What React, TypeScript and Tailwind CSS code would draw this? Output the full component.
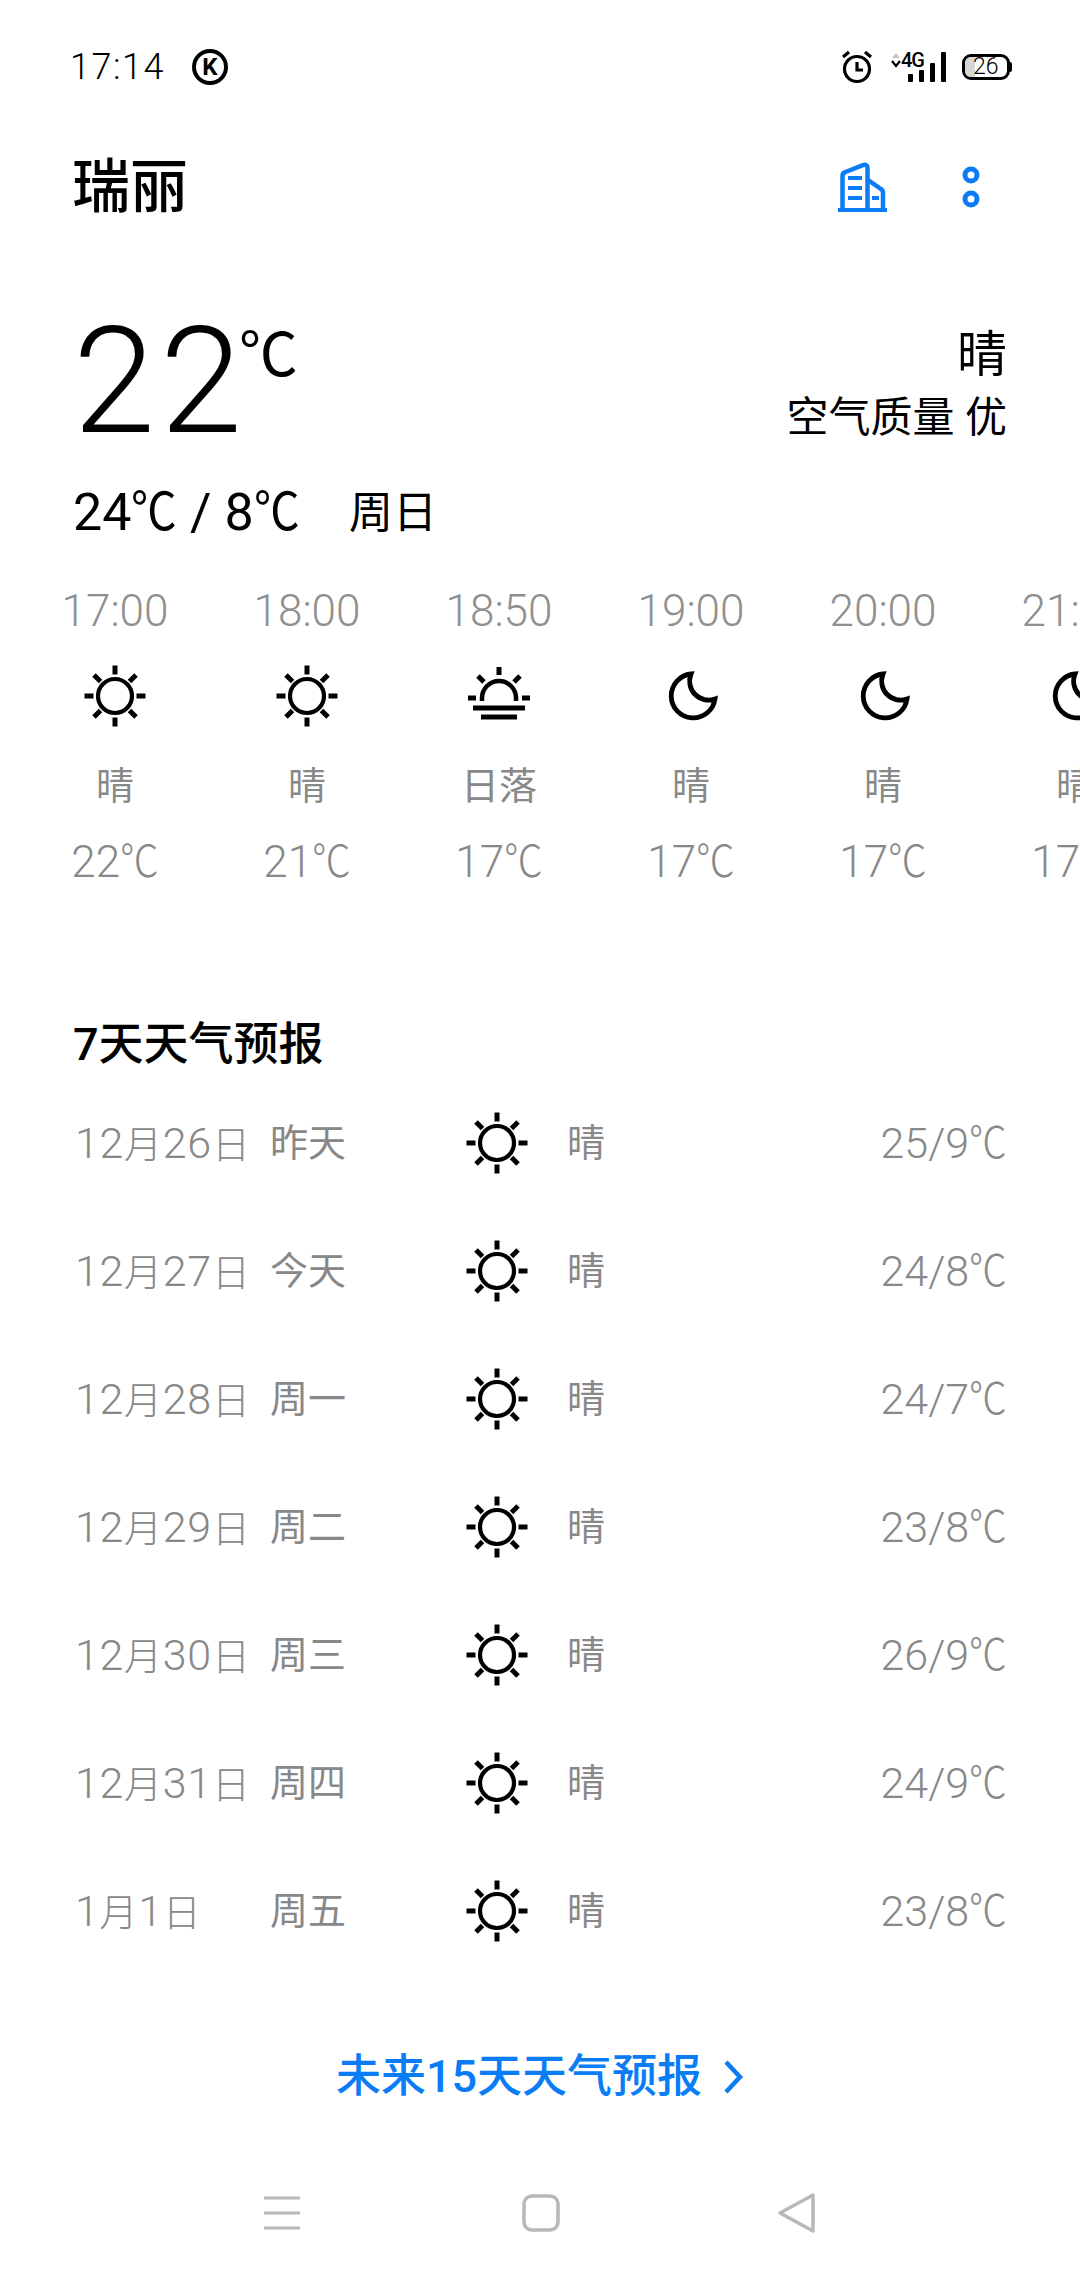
import React from 'react';

const base = { fontFamily: 'Roboto, "Noto Sans CJK SC", sans-serif' };
const cjkOnly = { fontFamily: '"Noto Sans CJK SC", sans-serif' };

const hours = [
  { time: '17:00', icon: 'sun', label: '晴', temp: '22' },
  { time: '18:00', icon: 'sun', label: '晴', temp: '21' },
  { time: '18:50', icon: 'sunset', label: '日落', temp: '17' },
  { time: '19:00', icon: 'moon', label: '晴', temp: '17' },
  { time: '20:00', icon: 'moon', label: '晴', temp: '17' },
  { time: '21:00', icon: 'moon', label: '晴', temp: '17' },
];

const days = [
  { date: '12月26日', day: '昨天', temp: '25/9' },
  { date: '12月27日', day: '今天', temp: '24/8' },
  { date: '12月28日', day: '周一', temp: '24/7' },
  { date: '12月29日', day: '周二', temp: '23/8' },
  { date: '12月30日', day: '周三', temp: '26/9' },
  { date: '12月31日', day: '周四', temp: '24/9' },
  { date: '1月1日', day: '周五', temp: '23/8' },
];

const rays = [
  'M32 1.500v9', 'M32 53.500v9', 'M1.500 32h9', 'M53.500 32h9',
  'M11 11l6.500 6.500', 'M53 11l-6.500 6.500', 'M11 53l6.500-6.500', 'M53 53l-6.500-6.500',
];

// the phone's ℃ is narrower than the Noto glyph
const Deg = () => (
  <span className="inline-block w-[0.88em] origin-left scale-x-[0.88] whitespace-nowrap leading-none" style={cjkOnly}>℃</span>
);

// digits are drawn larger than the hanzi in the date column
const DateText = ({ value }: { value: string }) => (
  <>
    {value.split(/(月|日)/).map((part, i) =>
      part === '月' || part === '日'
        ? <span key={i} className="text-[38px]">{part}</span>
        : <span key={i}>{part}</span>
    )}
  </>
);

const SunIcon = () => (
  <svg width="64" height="64" viewBox="0 0 64 64" fill="none" stroke="#000" strokeWidth="5">
    <circle cx="32" cy="32" r="17" strokeWidth="4.200" />
    {rays.map(d => <path key={d} d={d} />)}
  </svg>
);

const SunsetIcon = () => (
  <svg width="64" height="64" viewBox="0 0 64 64" fill="none" stroke="#000" strokeWidth="5">
    <path d="M15 37v-3a17 17 0 0 1 34 0v3" strokeWidth="4.500" />
    <path d="M32 3v8M11 12l6 6M53 12l-6 6M1 34h8M55 34h8M6 44h52M14 53h36" />
  </svg>
);

const MoonIcon = () => (
  <svg width="64" height="64" viewBox="0 0 64 64" fill="none" stroke="#000" strokeWidth="4.800" strokeLinejoin="miter">
    <path d="M32 10A22 22 0 1 0 56 35A19 19 0 0 1 32 10Z" />
  </svg>
);

const WeatherIcon = ({ name }: { name: string }) => {
  if (name === 'sunset') return <SunsetIcon />;
  if (name === 'moon') return <MoonIcon />;
  return <SunIcon />;
};

const StatusBar = () => (
  <div className="flex h-[134px] items-center justify-between pl-[70px] pr-[68px]">
    <div className="flex items-center">
      <span className="text-[36px] font-light tracking-[1.500px] text-black">17:14</span>
      <span className="ml-[27px] flex h-[36px] w-[36px] items-center justify-center rounded-full border-[4px] border-black text-[24px] font-bold leading-none text-black">
        K
      </span>
    </div>
    <div className="flex items-center">
      <svg width="32" height="34" viewBox="0 0 32 34" fill="none" stroke="#000" strokeWidth="3.200">
        <circle cx="16" cy="19" r="12.500" />
        <path d="M16 12v8h6" />
        <path d="M2 7l6-5M30 7l-6-5" />
      </svg>
      <div className="relative ml-[18px] h-[32px] w-[56px]">
        <svg className="absolute left-0 top-0" width="56" height="32" viewBox="0 0 56 32">
          <path d="M1 7l4-5 4 5z" fill="#c4c4c4" />
          <path d="M1 10l4 5 4-5" fill="none" stroke="#000" strokeWidth="2.200" />
          <rect x="17" y="23" width="5" height="8" rx="1" fill="#000" />
          <rect x="28" y="19" width="5" height="12" rx="1" fill="#000" />
          <rect x="39" y="12" width="5" height="19" rx="1" fill="#000" />
          <rect x="50" y="1" width="5" height="30" rx="1" fill="#000" />
        </svg>
        <span className="absolute left-[10px] top-[-3px] text-[20px] font-medium leading-[24px] tracking-[-1px] text-black">4G</span>
      </div>
      <div className="relative ml-[15px] h-[26px] w-[48px] rounded-[9px] border-[3px] border-black">
        <div className="h-full w-[10px] rounded-l-[6px] bg-[#d6d6d6]" />
        <span className="absolute left-[8px] top-[-3px] text-[23px] font-light leading-[26px] text-black">26</span>
      </div>
      <div className="h-[10px] w-[2px] rounded-r-sm bg-black" />
    </div>
  </div>
);

const TitleBar = () => (
  <div className="flex h-[106px] items-center justify-between pl-[72px] pr-[100px]">
    <h1 className="text-[58px] font-medium leading-none text-black">瑞丽</h1>
    <div className="flex items-center gap-[75px]">
      <svg width="49" height="50" viewBox="0 0 49 50" fill="none" stroke="#0a7cf5" strokeWidth="4.500">
        <path d="M4.500 47V14q0-3 3-4l18-7q4-1 4 3v41" />
        <path d="M30 18l13 9q2 1 2 4v16" />
        <path d="M0 48h49" strokeWidth="4" />
        <path d="M10 16h14M10 26h14M10 36h14M34 36h7" strokeWidth="4" />
      </svg>
      <svg width="18" height="42" viewBox="0 0 18 42" fill="none" stroke="#0a7cf5" strokeWidth="5">
        <circle cx="9" cy="9" r="6" />
        <circle cx="9" cy="33" r="6" />
      </svg>
    </div>
  </div>
);

const Hero = () => (
  <div className="flex items-start justify-between px-[73px] pt-[68px]">
    <div className="flex items-start">
      <span className="text-[148px] font-light leading-[148px] tracking-[5px] text-black">22</span>
      <span className="ml-[-8px] mt-[2px] text-[60px] leading-[80px] text-black" style={cjkOnly}>
        <span className="inline-block origin-left scale-x-[0.98]">℃</span>
      </span>
    </div>
    <div className="flex flex-col items-end pt-[17px]">
      <span className="text-[50px] leading-[60px] text-black">晴</span>
      <span className="text-[42px] leading-[65px] text-black">空气质量 优</span>
    </div>
  </div>
);

const TodayLine = () => (
  <div className="flex items-center pl-[73px] pt-[25px] text-[52px] leading-[64px] text-black">
    <span className="w-[276px] whitespace-nowrap">24<Deg /> / 8<Deg /></span>
    <span className="text-[44px]">周日</span>
  </div>
);

const HourlyStrip = () => (
  <div className="flex overflow-hidden pl-[19px] pt-[38px]">
    {hours.map((h, i) => (
      <div key={i} className="flex w-[192px] shrink-0 flex-col items-center">
        <span className="h-[56px] whitespace-nowrap text-[44px] font-light leading-[56px] text-[#8f8f8f]">{h.time}</span>
        <div className="mt-[25px]"><WeatherIcon name={h.icon} /></div>
        <span className="mt-[32px] h-[52px] whitespace-nowrap text-[38px] leading-[52px] text-[#888888]">{h.label}</span>
        <span className="mt-[23px] whitespace-nowrap text-[44px] font-light leading-[54px] text-[#888888]">{h.temp}<Deg /></span>
      </div>
    ))}
  </div>
);

const Forecast = () => (
  <div className="px-[73px] pt-[126px]">
    <h2 className="text-[45px] font-medium leading-[60px] text-black">7天天气预报</h2>
    <div className="mt-[4px]">
      {days.map(d => (
        <div key={d.date} className="flex h-[128px] items-center">
          <span className="w-[197px] pl-[2px] text-[43px] font-light tracking-[0.700px] text-[#888888]"><DateText value={d.date} /></span>
          <span className="w-[195px] text-[38px] text-[#888888]">{d.day}</span>
          <SunIcon />
          <span className="ml-[38px] text-[38px] text-[#888888]">晴</span>
          <span className="ml-auto text-[43px] font-light text-[#888888]">{d.temp}<Deg /></span>
        </div>
      ))}
    </div>
  </div>
);

const NavBar = () => (
  <div className="flex items-center pl-[262px] pt-[85px]">
    <svg width="40" height="40" viewBox="0 0 40 40" fill="none" stroke="#b8b8b8" strokeWidth="3">
      <path d="M2 5h36M2 20h36M2 35h36" />
    </svg>
    <svg className="ml-[219px]" width="40" height="40" viewBox="0 0 40 40" fill="none" stroke="#b8b8b8" strokeWidth="3.500">
      <rect x="3" y="3" width="34" height="34" rx="8" />
    </svg>
    <svg className="ml-[216px]" width="40" height="42" viewBox="0 0 40 42" fill="none" stroke="#b8b8b8" strokeWidth="3.500" strokeLinejoin="round">
      <path d="M36 3L3 21l33 18z" />
    </svg>
  </div>
);

export default function App() {
  return (
    <div className="h-[2280px] w-[1080px] overflow-hidden bg-white" style={base}>
      <StatusBar />
      <TitleBar />
      <Hero />
      <TodayLine />
      <HourlyStrip />
      <Forecast />
      <div className="flex items-center justify-center gap-[20px] pt-[72px] text-[#0a7cf5]">
        <span className="text-[45px] font-medium leading-[60px]">未来15天天气预报</span>
        <svg width="22" height="36" viewBox="0 0 22 36" fill="none" stroke="#0a7cf5" strokeWidth="4.500">
          <path d="M4 3l14 15L4 33" />
        </svg>
      </div>
      <NavBar />
    </div>
  );
}
